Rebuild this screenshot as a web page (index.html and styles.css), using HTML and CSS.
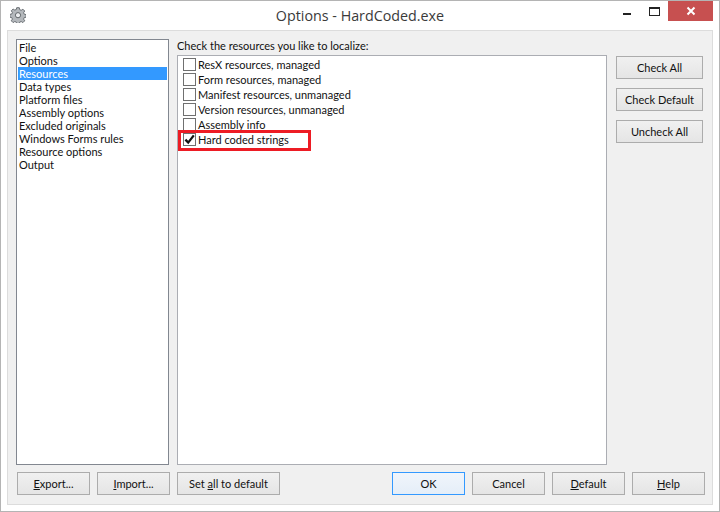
FILE: index.html
```html
<!DOCTYPE html>
<html lang="en">
<head>
<meta charset="utf-8">
<title>Options - HardCoded.exe</title>
<link rel="stylesheet" href="styles.css">
</head>
<body>
<div class="window">
  <header class="titlebar">
    <svg class="app-icon" width="16" height="16" viewBox="0 0 16 16">
      <path d="M6.7 0.7h2.6l.4 2 1.5.6 1.7-1.1 1.8 1.8-1.1 1.7.6 1.5 2 .4v2.6l-2 .4-.6 1.5 1.1 1.7-1.8 1.8-1.7-1.1-1.5.6-.4 2H6.7l-.4-2-1.5-.6-1.7 1.1-1.8-1.8 1.1-1.7-.6-1.5-2-.4V7.4l2-.4.6-1.5-1.1-1.7 1.8-1.8 1.7 1.1 1.5-.6z" fill="#b4b8bc" stroke="#6a6f74" stroke-width="1"/>
      <circle cx="8" cy="8.2" r="2.6" fill="#eceef0" stroke="#5f6468"/>
    </svg>
    <div class="title">Options - HardCoded.exe</div>
    <div class="controls">
      <span class="ctl"><span class="min"></span></span>
      <span class="ctl"><span class="max"></span></span>
      <span class="close">
        <svg width="10" height="10" viewBox="0 0 10 10"><path d="M1.5 1.5l7 7M8.5 1.5l-7 7" stroke="#fff" stroke-width="2"/></svg>
      </span>
    </div>
  </header>
  <main class="client">
    <div class="top">
      <ul class="nav">
        <li>File</li>
        <li>Options</li>
        <li class="selected">Resources</li>
        <li>Data types</li>
        <li>Platform files</li>
        <li>Assembly options</li>
        <li>Excluded originals</li>
        <li>Windows Forms rules</li>
        <li>Resource options</li>
        <li>Output</li>
      </ul>
      <section class="center">
        <div class="prompt">Check the resources you like to localize:</div>
        <div class="checklist">
          <div class="row"><span class="box"></span>ResX resources, managed</div>
          <div class="row"><span class="box"></span>Form resources, managed</div>
          <div class="row"><span class="box"></span>Manifest resources, unmanaged</div>
          <div class="row"><span class="box"></span>Version resources, unmanaged</div>
          <div class="row"><span class="box"></span>Assembly info</div>
          <div class="row"><span class="box"><svg width="11" height="11" viewBox="0 0 11 11"><path d="M1.4 5.6l2.8 3L9.8 1.4" fill="none" stroke="#111" stroke-width="2.3"/></svg></span>Hard coded strings</div>
          <div class="highlight"></div>
        </div>
      </section>
      <aside class="side">
        <button class="btn side-btn">Check All</button>
        <button class="btn side-btn">Check Default</button>
        <button class="btn side-btn">Uncheck All</button>
      </aside>
    </div>
    <footer class="bottom">
      <button class="btn"><u>E</u>xport...</button>
      <button class="btn"><u>I</u>mport...</button>
      <button class="btn wide">Set <u>a</u>ll to default</button>
      <span class="spacer"></span>
      <button class="btn primary">OK</button>
      <button class="btn">Cancel</button>
      <button class="btn"><u>D</u>efault</button>
      <button class="btn"><u>H</u>elp</button>
    </footer>
  </main>
</div>
</body>
</html>
```

FILE: styles.css
```css
* { box-sizing: border-box; }
html, body { margin: 0; padding: 0; }
body { width: 720px; height: 512px; overflow: hidden; background: #fff; }
.window {
  width: 720px; height: 512px;
  display: flex; flex-direction: column;
  background: #fff;
  border: 1px solid #b4b4b4;
  font: 11px/13px Lato, "Open Sans", sans-serif;
  color: #111;
}
.titlebar { height: 29px; display: flex; position: relative; align-items: flex-start; flex: none; }
.app-icon { margin: 6px 0 0 9px; flex: none; }
.title {
  position: absolute; left: 0; right: 0; top: 5px;
  text-align: center;
  font: 14.3px/20px "Open Sans", sans-serif; color: #3a3a3a;
}
.controls { margin-left: auto; display: flex; position: relative; }
.ctl { width: 24px; height: 20px; position: relative; display: block; }
.min { position: absolute; left: 3px; top: 12px; width: 8px; height: 2px; background: #222; }
.max { position: absolute; left: 5px; top: 6px; width: 11px; height: 9px; border: 1px solid #222; border-top-width: 2px; }
.close {
  width: 45px; height: 20px; margin-right: 6px;
  background: #c75050;
  display: flex; align-items: center; justify-content: center;
}
.client {
  flex: 1;
  margin: 0 6px 6px;
  background: #f0f0f0;
  border: 1px solid #dcdcdc;
  padding: 8px 7px 9px 8px;
  display: flex; flex-direction: column;
}
.top { display: flex; height: 426px; }
.nav {
  width: 153px; margin: 0; padding: 1px 1px;
  list-style: none;
  background: #fff;
  border: 1px solid #828790;
  flex: none;
}
.nav li { height: 13px; line-height: 13px; padding-left: 1px; white-space: nowrap; }
.nav .selected { background: #3399ff; color: #fff; }
.center { width: 430px; margin-left: 8px; display: flex; flex-direction: column; flex: none; }
.prompt { height: 16px; line-height: 14px; }
.checklist {
  flex: 1;
  background: #fff;
  border: 1px solid #abadb3;
  padding: 1px 0 0 5px;
  position: relative;
}
.row { height: 15px; display: flex; align-items: center; white-space: nowrap; line-height: 13px; }
.box {
  width: 13px; height: 13px; margin-right: 2px;
  border: 1px solid #707070;
  background: #fff;
  display: flex; align-items: center; justify-content: center;
  flex: none;
}
.highlight {
  position: absolute; left: 0; top: 74px;
  width: 133px; height: 21px;
  border: 3px solid #ed1c24;
}
.side { margin-left: 9px; padding-top: 17px; display: flex; flex-direction: column; gap: 9px; }
.btn {
  width: 73px; height: 23px; padding: 0;
  font: inherit; color: #111;
  background: linear-gradient(#f0f0f0, #e5e5e5);
  border: 1px solid #acacac;
  flex: none;
}
.side-btn { width: 87px; }
.wide { width: 103px; }
.primary { border-color: #3399ff; background: linear-gradient(#f0f5fb, #e5eef8); }
.bottom { display: flex; gap: 7px; margin-top: 7px; padding-left: 1px; }
.spacer { flex: 1; }
```
